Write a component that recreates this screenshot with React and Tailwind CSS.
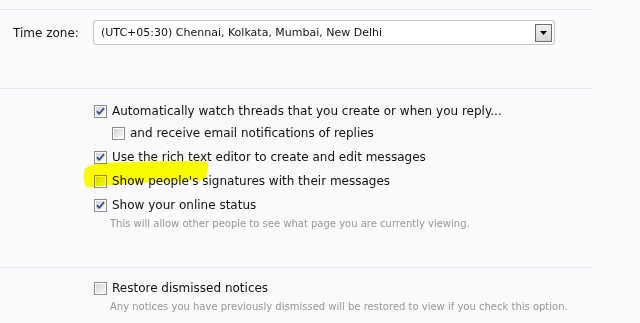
import React from 'react';

const Checkbox = ({ checked = false }) => (
  <svg width="13" height="13" viewBox="0 0 13 13" className="shrink-0">
    <defs>
      <linearGradient id="cbfill" x1="0" y1="0" x2="1" y2="1">
        <stop offset="0" stopColor="#d4d4d4" />
        <stop offset="1" stopColor="#fbfbfb" />
      </linearGradient>
    </defs>
    <rect x="0.5" y="0.5" width="12" height="12" fill="#fff" stroke="#8d8d8d" />
    <rect x="2" y="2" width="9" height="9" fill="url(#cbfill)" />
    {checked && (
      <path d="M3 6.2 L5.2 8.8 L10 3.2" fill="none" stroke="#3b4e90" strokeWidth="1.8" strokeLinejoin="round" />
    )}
  </svg>
);

const Option = ({ checked, label, hint, indent = false, children }) => (
  <div className={indent ? 'pl-[18px]' : ''}>
    <div className="relative flex h-[18px] items-center gap-[5px] whitespace-nowrap text-[12px] text-[#111]">
      {children}
      <Checkbox checked={checked} />
      <span className="relative">{label}</span>
    </div>
    {hint && <div className="mt-[1px] h-[18px] whitespace-nowrap pl-[16px] text-[10px] leading-[18px] text-[#979797]">{hint}</div>}
  </div>
);

export default function App() {
  return (
    <div
      className="h-[323px] w-[640px] overflow-hidden bg-[#fafafc]"
      style={{ fontFamily: "'DejaVu Sans', Verdana, sans-serif" }}
    >
      <div className="w-[593px] pt-[9px]">
        <div className="h-[79px] border-t border-[#e6e6ea] pt-[10px]">
          <div className="flex items-center">
            <span className="w-[93px] whitespace-nowrap pl-[13px] text-[12px] text-[#111]">Time zone:</span>
            <div className="flex h-[25px] w-[462px] items-center justify-between rounded-[3px] border border-[#c4c4c4] bg-white pl-[7px] pr-[2px]">
              <span className="pt-[1px] whitespace-nowrap text-[11px] text-[#111]">(UTC+05:30) Chennai, Kolkata, Mumbai, New Delhi</span>
              <div className="flex h-[18px] w-[17px] items-center justify-center border border-[#6e6e6e] bg-gradient-to-b from-[#f0f0f0] to-[#d6d6d6]">
                <svg width="7" height="4" viewBox="0 0 7 4">
                  <path d="M0 0 H7 L3.5 4 Z" fill="#000" />
                </svg>
              </div>
            </div>
          </div>
        </div>

        <div className="h-[179px] border-t border-[#e6e6ea] pl-[94px] pt-[13px]">
          <Option checked label="Automatically watch threads that you create or when you reply..." />
          <div className="mt-[4px]">
            <Option indent label="and receive email notifications of replies" />
          </div>
          <div className="mt-[6px]">
            <Option checked label="Use the rich text editor to create and edit messages" />
          </div>
          <div className="mt-[6px]">
            <Option label="Show people's signatures with their messages">
              <svg
                className="pointer-events-none absolute left-[-11px] top-[-12px] mix-blend-multiply"
                width="128"
                height="30"
                viewBox="0 0 128 30"
                style={{ filter: 'blur(0.6px)' }}
              >
                <path
                  d="M2 9 C6 5 14 3 30 2.5 C60 1.5 95 1 122 1.5 C125 2 126 6 124.5 10 C124 14 124 18 122 20 C100 21 70 22 40 24 C25 25 12 27 4 27 C0 24 0 14 2 9 Z"
                  fill="#ffff00"
                />
              </svg>
            </Option>
          </div>
          <div className="mt-[6px]">
            <Option
              checked
              label="Show your online status"
              hint="This will allow other people to see what page you are currently viewing."
            />
          </div>
        </div>

        <div className="border-t border-[#e6e6ea] pl-[94px] pt-[11px]">
          <Option
            label="Restore dismissed notices"
            hint="Any notices you have previously dismissed will be restored to view if you check this option."
          />
        </div>
      </div>
    </div>
  );
}
